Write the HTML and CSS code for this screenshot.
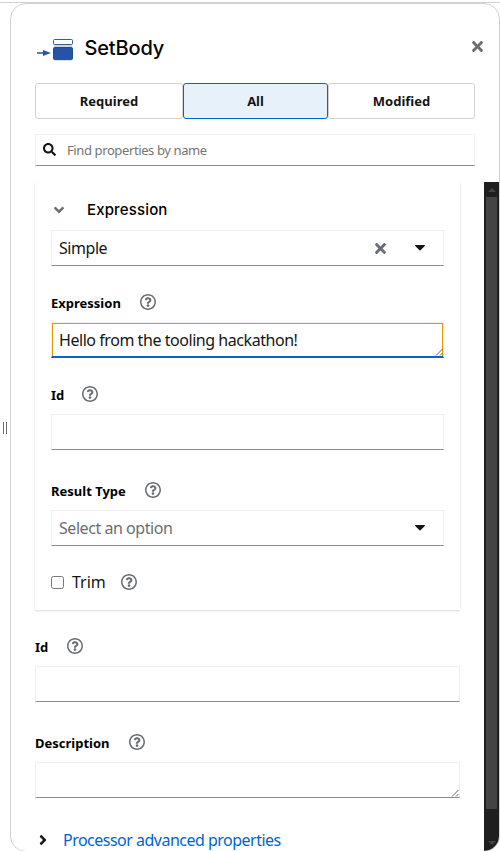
FILE: index.html
```html
<!DOCTYPE html>
<html lang="en">
<head>
<meta charset="utf-8">
<title>SetBody</title>
<link rel="stylesheet" href="styles.css">
</head>
<body>
<svg width="0" height="0" class="defs">
  <symbol id="help" viewBox="8 8 496 496"><path d="M256 8C119.043 8 8 119.083 8 256c0 136.997 111.043 248 248 248s248-111.003 248-248C504 119.083 392.957 8 256 8zm0 448c-110.532 0-200-89.431-200-200 0-110.495 89.472-200 200-200 110.491 0 200 89.471 200 200 0 110.53-89.431 200-200 200zm107.244-255.2c0 67.052-72.421 68.084-72.421 92.863V300c0 6.627-5.373 12-12 12h-45.647c-6.627 0-12-5.373-12-12v-8.659c0-35.745 27.1-50.034 47.579-61.516 17.561-9.845 28.324-16.541 28.324-29.579 0-17.246-21.999-28.693-39.784-28.693-23.189 0-33.894 10.977-48.942 29.969-4.057 5.12-11.46 6.071-16.666 2.124l-27.824-21.098c-5.107-3.872-6.251-11.066-2.644-16.363C184.846 131.491 214.94 112 261.794 112c49.071 0 101.45 38.304 101.45 88.8zM298 368c0 23.159-18.841 42-42 42s-42-18.841-42-42 18.841-42 42-42 42 18.841 42 42z"/></symbol>
  <symbol id="times" viewBox="0 80 352 352"><path d="M242.72 256l100.07-100.07c12.28-12.28 12.28-32.19 0-44.48l-22.24-22.24c-12.28-12.28-32.19-12.28-44.48 0L176 189.28 75.93 89.21c-12.28-12.28-32.19-12.28-44.48 0L9.21 111.45c-12.28 12.28-12.28 32.19 0 44.48L109.28 256 9.21 356.07c-12.28 12.28-12.28 32.19 0 44.48l22.24 22.24c12.28 12.28 32.2 12.28 44.48 0L176 322.72l100.07 100.07c12.28 12.28 32.2 12.28 44.48 0l22.24-22.24c12.28-12.28 12.28-32.19 0-44.48L242.72 256z"/></symbol>
  <symbol id="angle" viewBox="0 0 256 512"><path d="M224.3 273l-136 136c-9.4 9.4-24.6 9.4-33.9 0l-22.6-22.6c-9.4-9.4-9.4-24.6 0-33.9l96.4-96.4-96.4-96.4c-9.4-9.4-9.4-24.6 0-33.9L54.3 103c9.4-9.4 24.6-9.4 33.9 0l136 136c9.5 9.4 9.5 24.6.1 34z"/></symbol>
  <symbol id="caret" viewBox="0 0 10 6"><path d="M.7 0h8.6c.6 0 .9.7.5 1.1L5.5 5.2a.7.7 0 0 1-1 0L.2 1.1C-.2.7.1 0 .7 0z"/></symbol>
</svg>
<div class="page">
  <div class="splitter"><i></i><i></i></div>
  <main class="panel">
    <header class="head">
      <svg class="logo" width="38" height="24" viewBox="0 0 38 24">
        <path d="M0 15h7" stroke="#2554a8" stroke-width="1.4"/>
        <path d="M6 12l8 3-8 3z" fill="#2554a8"/>
        <rect x="17" y="7" width="18" height="3" fill="#ccd5dc"/>
        <rect x="16.5" y="1.5" width="19" height="5" rx="1" fill="#fff" stroke="#31618c"/>
        <rect x="16.5" y="9.5" width="19" height="12" rx="1" fill="#2454aa" stroke="#1c4f85"/>
        <path d="M17 22.4h18" stroke="#ccd5dc" stroke-width=".8"/>
      </svg>
      <h1 class="title">SetBody</h1>
      <svg class="close" width="11" height="11"><use href="#times"/></svg>
    </header>
    <div class="tabs">
      <button class="tab"><span>Required</span></button>
      <button class="tab active"><span>All</span></button>
      <button class="tab"><span>Modified</span></button>
    </div>
    <div class="search">
      <svg width="13" height="13" viewBox="0 0 512 512"><path d="M505 442.7L405.3 343c-4.5-4.5-10.6-7-17-7H372c27.6-35.3 44-79.7 44-128C416 93.1 322.9 0 208 0S0 93.1 0 208s93.1 208 208 208c48.3 0 92.7-16.4 128-44v16.3c0 6.4 2.5 12.5 7 17l99.7 99.7c9.4 9.4 24.6 9.4 33.9 0l28.3-28.3c9.4-9.4 9.4-24.6.1-34zM208 336c-70.7 0-128-57.2-128-128 0-70.7 57.2-128 128-128 70.7 0 128 57.2 128 128 0 70.7-57.2 128-128 128z"/></svg>
      <span>Find properties by name</span>
    </div>
    <div class="scroll">
      <div class="form">
        <section class="card">
          <div class="card-head"><svg class="down" width="8" height="16"><use href="#angle"/></svg><h2>Expression</h2></div>
          <div class="field"><span class="value">Simple</span><svg class="clear" width="11" height="11"><use href="#times"/></svg><svg class="caret" width="10" height="6"><use href="#caret"/></svg></div>
          <div class="label"><b class="l-expression">Expression</b><svg class="help"><use href="#help"/></svg></div>
          <div class="field focused"><span class="value">Hello from the tooling hackathon!</span><svg class="grip" width="8" height="8" viewBox="0 0 8 8"><path d="M1 7.5l6.5-6.5M5 7.5l2.5-2.5"/></svg></div>
          <div class="label"><b class="l-id">Id</b><svg class="help"><use href="#help"/></svg></div>
          <div class="field"></div>
          <div class="label spaced"><b class="l-result">Result Type</b><svg class="help"><use href="#help"/></svg></div>
          <div class="field"><span class="value muted">Select an option</span><svg class="caret" width="10" height="6"><use href="#caret"/></svg></div>
          <div class="check"><input type="checkbox"><span>Trim</span><svg class="help"><use href="#help"/></svg></div>
        </section>
        <div class="label"><b class="l-id outer">Id</b><svg class="help"><use href="#help"/></svg></div>
        <div class="field"></div>
        <div class="label spaced"><b class="l-description">Description</b><svg class="help"><use href="#help"/></svg></div>
        <div class="field"><svg class="grip" width="8" height="8" viewBox="0 0 8 8"><path d="M1 7.5l6.5-6.5M5 7.5l2.5-2.5"/></svg></div>
        <div class="more"><svg width="8" height="16"><use href="#angle"/></svg><span>Processor advanced properties</span></div>
      </div>
      <div class="bar"><i class="up"></i><div class="thumb"></div><i class="dn"></i></div>
    </div>
  </main>
</div>
</body>
</html>
```
FILE: styles.css
```css
* { box-sizing: border-box; }
html { height: 851px; overflow: hidden; }
body { margin: 0; height: 851px; background: #fff; color: #151515; font: 16px/24px "Noto Sans", sans-serif; overflow: hidden; }
svg { display: block; flex: none; fill: currentColor; }
.defs { position: absolute; }
h1, h2 { margin: 0; font-family: Inter, sans-serif; font-weight: 500; color: #000; }
.page { height: 852px; padding-top: 3px; display: flex; background: linear-gradient(#d2d2d2, #d2d2d2) 0 2px / 100% 1px no-repeat; }
.splitter { width: 10px; display: flex; align-items: center; justify-content: center; gap: 2px; padding-top: 1px; }
.splitter i { width: 1px; height: 12px; background: #6a6e73; }
.panel { width: 490px; height: 849px; border: 1px solid #d2d2d2; border-radius: 16px; overflow: hidden; display: flex; flex-direction: column; }
.head { flex: none; height: 79px; padding: 33px 16px 0 26px; display: flex; align-items: flex-start; }
.logo { margin-top: 1px; }
.title { margin: -2px auto 0 9.5px; font-size: 20px; line-height: 27px; letter-spacing: -.15px; }
.close { margin-top: 4px; color: #6a6e73; }
.tabs { flex: none; display: grid; grid-template-columns: 148px 145px 147px; height: 36px; margin-left: 24px; }
.tab { padding: 0; border: 1px solid #d2d2d2; border-radius: 3px; background: #fff; color: #151515; font: 700 13px/20px "Noto Sans", sans-serif; }
.tab.active { background: #e7f1fa; border-color: #06c; }
.search { flex: none; width: 440px; height: 32px; margin: 15px 0 0 24px; border: 1px solid #f0f0f0; border-bottom-color: #8a8d90; display: flex; align-items: center; padding: 0 0 1px 7px; gap: 11px; font-size: 13px; letter-spacing: -.39px; color: #757575; }
.search svg { color: #151515; }
.scroll { flex: none; margin-top: 16px; height: 669px; display: flex; justify-content: space-between; }
.form { width: 425px; margin-left: 24px; }
.card { height: 428px; padding: 15px 16px 0; box-shadow: 0 1px 2px rgba(3,3,3,.12), 0 0 2px rgba(3,3,3,.06); clip-path: inset(0 -3px -4px -3px); }
.card-head { height: 33px; display: flex; gap: 24px; padding-left: 4px; color: #6a6e73; }
.card-head h2 { font-size: 15px; line-height: 25px; letter-spacing: .15px; }
.down { transform: rotate(90deg); margin-top: 5px; }
.field { position: relative; height: 36px; border: 1px solid #f0f0f0; border-bottom-color: #8a8d90; display: flex; align-items: center; padding: 0 18px 0 7px; }
.value { margin-right: auto; white-space: nowrap; font-size: 16px; letter-spacing: -.45px; }
.muted { color: #6a6e73; }
.clear { color: #6a6e73; margin-right: 29px; }
.focused { border-bottom: 2px solid #06c; }
.focused::before { content: ""; position: absolute; inset: 0; border: 1px solid #e59700; border-bottom: 0; }
.grip { position: absolute; right: 0; bottom: 0; fill: none; stroke: #555; stroke-width: .9; }
.label { height: 16px; margin: 28px 0 12px; display: flex; align-items: center; }
.label.spaced { margin-top: 32px; }
.label b { font-size: 13px; line-height: 18px; color: #000; white-space: nowrap; padding-top: 1px; }
.help { width: 16px; height: 16px; color: #6a6e73; }
.l-expression { width: 89px; }
.l-id { width: 31px; }
.l-id.outer { width: 32px; }
.l-result { width: 94px; }
.l-description { width: 94px; }
.check { height: 16px; margin-top: 28px; display: flex; align-items: center; }
.check input { margin: 0 8px 0 0; width: 13px; height: 13px; }
.check span { width: 49px; }
.more { display: flex; align-items: center; gap: 16px; margin-top: 30px; padding-left: 4px; height: 24px; }
.more span { color: #06c; letter-spacing: -.51px; white-space: nowrap; }
.bar { width: 15px; background: #1f1f1f; display: flex; flex-direction: column; align-items: center; padding: 6px 0; }
.bar i { border: 4px solid transparent; width: 0; height: 0; }
.up { border-top-width: 0 !important; border-bottom-color: #444 !important; }
.dn { border-bottom-width: 0 !important; border-top-color: #444 !important; margin-top: 32px; }
.thumb { width: 11px; height: 612px; margin-top: 5px; background: #444; }
```
